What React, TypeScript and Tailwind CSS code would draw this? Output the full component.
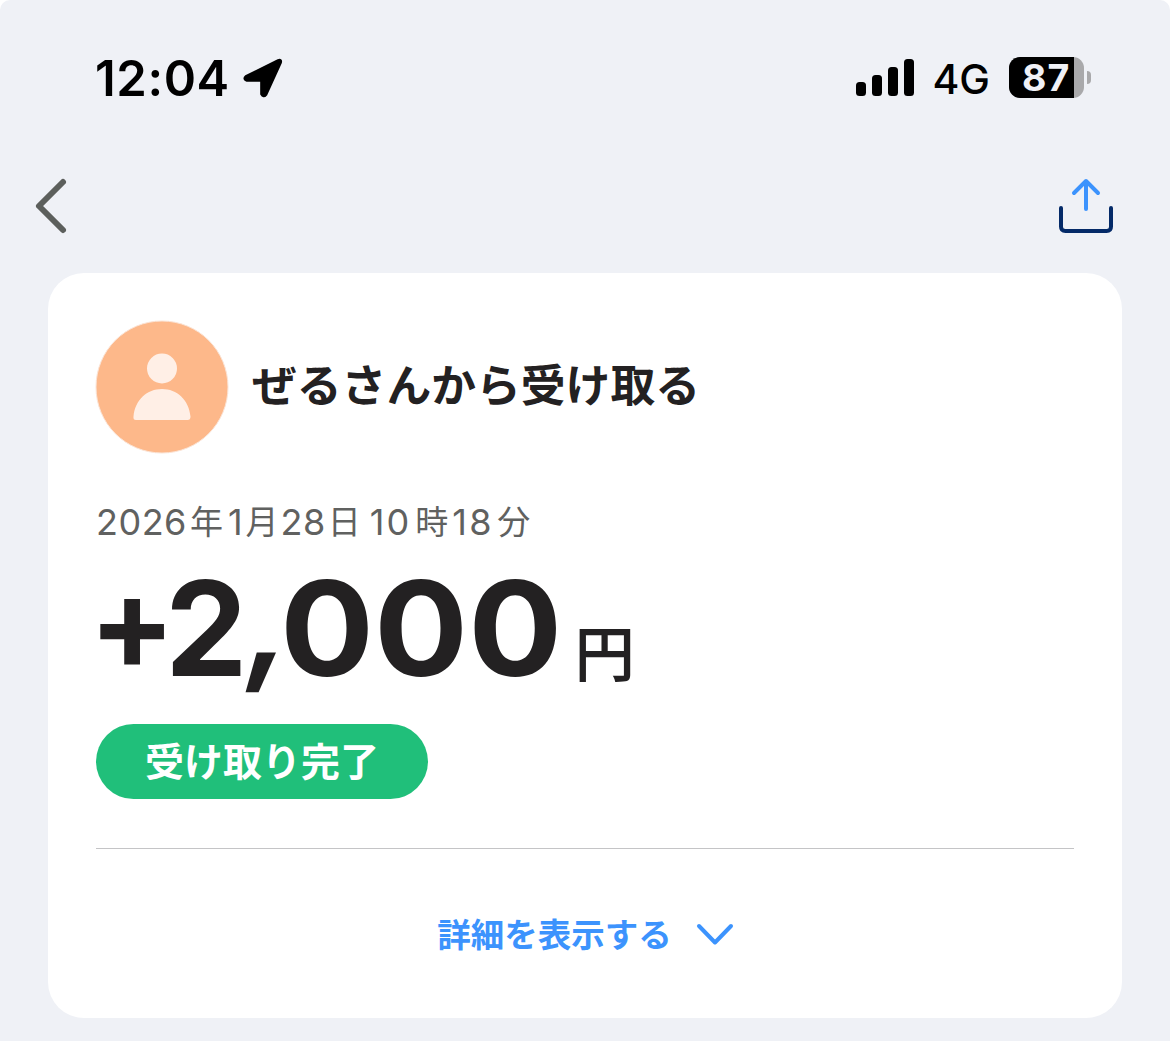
import React from "react";

interface Transaction {
  title: string;
  date: { text: string; className: string }[];
  unit: string;
  status: string;
}

const transaction: Transaction = {
  title: "ぜるさんから受け取る",
  date: [
    { text: "2026", className: "tracking-[0.5px]" },
    { text: "年", className: "mr-[5px] ml-[3px] text-[33px]" },
    { text: "1", className: "" },
    { text: "月", className: "mr-[2px] ml-[3px] text-[33px]" },
    { text: "28", className: "tracking-[0.5px]" },
    { text: "日", className: "mr-[9px] ml-[2px] text-[33px]" },
    { text: "10", className: "tracking-[2px]" },
    { text: "時", className: "mr-[4px] ml-[4px] text-[33px]" },
    { text: "18", className: "tracking-[2.5px]" },
    { text: "分", className: "ml-[3px] text-[33px]" },
  ],
  unit: "円",
  status: "受け取り完了",
};

const signalBars = ["h-[14px]", "h-[21px]", "h-[29px]", "h-[37px]"];

const StatusBar = () => (
  <div className="flex h-[156px] items-center justify-between pr-[79px] pl-[95px]">
    <div className="flex items-center">
      <span className="text-[49px] leading-none font-semibold tracking-[0.6px]">
        12:04
      </span>
      <svg className="ml-[13px] h-[41px] w-[41px]" viewBox="0 0 40 40">
        <path
          d="M3 18.5 34.5 2.8Q37 1.7 36.2 4.5L22 35.5Q20 38 18.5 35V21.5H4Q1 20.5 3 18.5Z"
          stroke="black"
          strokeWidth="3.5"
          strokeLinejoin="round"
        />
      </svg>
    </div>
    <div className="-mt-[2px] flex items-center">
      <div className="flex items-end gap-[6px]">
        {signalBars.map((height) => (
          <span key={height} className={`w-[10px] rounded-[3.5px] bg-black ${height}`} />
        ))}
      </div>
      <span className="mt-[4px] ml-[18px] text-[41px] leading-none font-medium">4G</span>
      {/* バッテリー */}
      <div className="ml-[19px] flex h-[41px] w-[75px] rounded-[11px] bg-[#a9a9ab]">
        <span className="w-[65px] rounded-l-[11px] bg-black pl-[13px] text-[37.5px] leading-[42px] font-bold tracking-[1px] text-[#f0f1f6]">
          87
        </span>
      </div>
      <span className="ml-[3px] h-[13px] w-[4px] rounded-r-full bg-[#a9a9ab]" />
    </div>
  </div>
);

const Header = () => (
  <div className="flex h-[117px] items-start justify-between pt-[21px] pr-[55px] pl-[33px]">
    <svg
      className="h-[58px] w-[36px]"
      viewBox="0 0 36 58"
      fill="none"
      stroke="#5c5f5c"
      strokeWidth="6"
      strokeLinecap="round"
      strokeLinejoin="round"
    >
      <path d="M30 5 6 29 30 53" />
    </svg>
    <svg
      className="h-[58px] w-[58px]"
      viewBox="0 0 58 58"
      fill="none"
      strokeWidth="4"
      strokeLinecap="round"
      strokeLinejoin="round"
    >
      <path d="M4 31V49.5Q4 54 8.5 54H49.5Q54 54 54 49.5V31" stroke="#042a68" />
      <path d="M29 32V4M17 16 29 4 41 16" stroke="#3c93fd" />
    </svg>
  </div>
);

const Avatar = () => (
  <svg className="h-[134px] w-[134px]" viewBox="0 0 134 134">
    <circle cx="67" cy="67" r="66" fill="#fdb88a" stroke="#fbe4d6" strokeWidth="1" />
    <circle cx="67" cy="48.5" r="15" fill="#ffefe6" />
    <path
      d="M41 100Q38 100 38.5 96.5C40 80 52 69 67 69S94 80 95.5 96.5Q95.5 100 92.5 100Z"
      fill="#ffefe6"
    />
  </svg>
);

// 桁ごとに字間が異なるため分割して表示
const Amount = () => (
  <span className="-ml-[7px] text-[131px] font-bold">
    <span className="inline-block origin-left -translate-y-[6px] scale-x-[0.97] tracking-[-13px]">
      +
    </span>
    <span className="tracking-[1px]">2</span>
    <span className="inline-block -translate-y-[9px] -skew-x-8">,</span>
    <span className="-ml-[12px] inline-block origin-left scale-x-[1.065]">000</span>
  </span>
);

export default function App() {
  return (
    <div className="bg-white">
      <div className="h-[1041px] w-[1170px] rounded-t-[10px] bg-[#eff1f6] font-[Inter,'Noto_Sans_CJK_JP',sans-serif] text-black">
        <StatusBar />
        <Header />

        <div className="mx-12 flex h-[745px] flex-col rounded-[36px] bg-white px-12 pt-[47px] text-[#232122]">
          {/* 送金相手 */}
          <div className="-ml-px flex items-center">
            <Avatar />
            <h1 className="mb-[3px] ml-[23px] text-[44.8px] leading-[60px] font-semibold">
              {transaction.title}
            </h1>
          </div>

          <p className="mt-[48px] flex h-[40px] items-center text-[36px] leading-none text-[#606160]">
            {transaction.date.map(({ text, className }) => (
              <span key={text} className={className}>
                {text}
              </span>
            ))}
          </p>

          {/* 金額 */}
          <div className="mt-[22px] flex h-[130px] items-baseline leading-[130px]">
            <Amount />
            <span className="ml-[30px] text-[59px] font-normal [-webkit-text-stroke:1.8px_#232122]">
              {transaction.unit}
            </span>
          </div>

          <div className="mt-[30px] flex h-[75px] w-[332px] items-center justify-center rounded-full bg-[#20bf7a] text-[39px] leading-none font-semibold text-white">
            {transaction.status}
          </div>

          <hr className="mt-[49px] border-[#c4c4c6]" />

          <button className="mt-[61px] ml-px flex h-[50px] items-center justify-center text-[33.5px] leading-none font-semibold text-[#3c93fd]">
            <span className="mt-[2px]">詳細を表示する</span>
            <svg
              className="ml-[24px] h-[24px] w-[38px]"
              viewBox="0 0 38 24"
              fill="none"
              stroke="currentColor"
              strokeWidth="4"
              strokeLinecap="round"
              strokeLinejoin="round"
            >
              <path d="M3 3 19 19.5 35 3" />
            </svg>
          </button>
        </div>
      </div>
    </div>
  );
}
